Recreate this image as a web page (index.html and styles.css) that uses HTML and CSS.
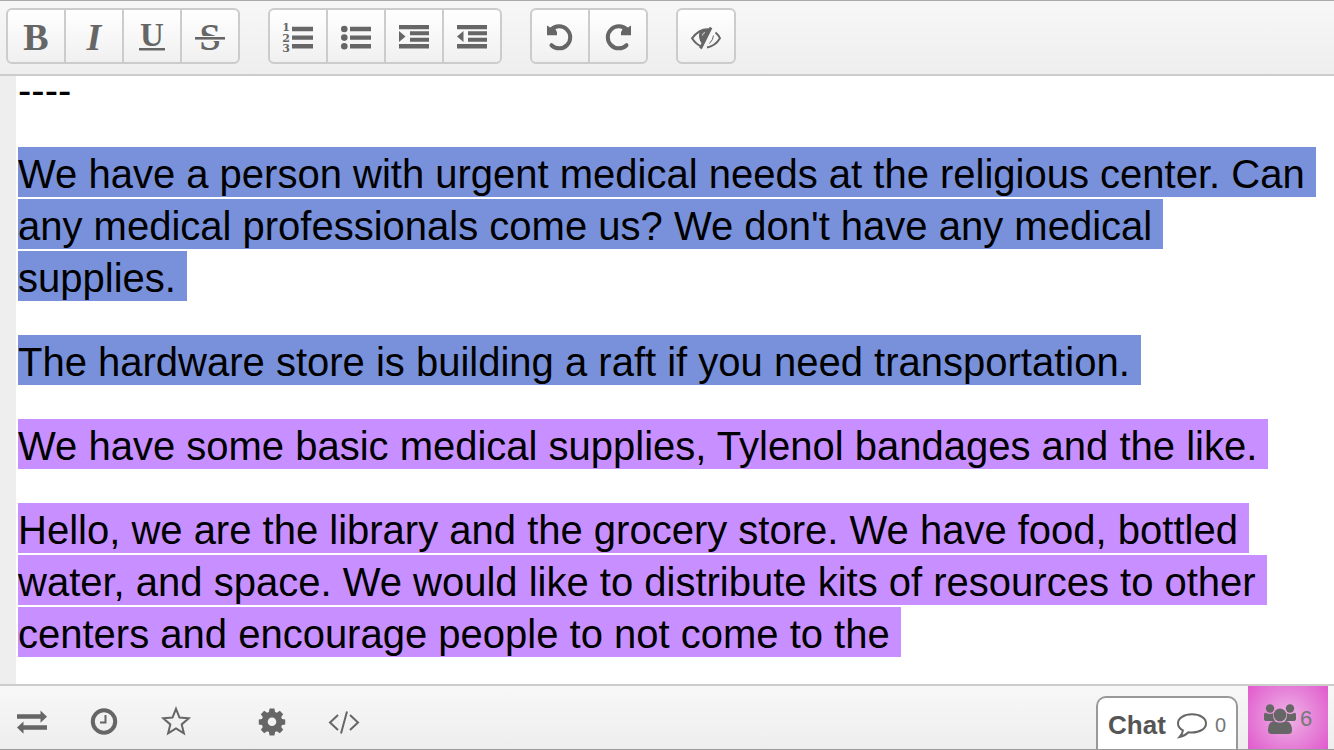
FILE: index.html
```html
<!DOCTYPE html>
<html lang="en">
<head>
<meta charset="utf-8">
<title>Pad</title>
<link rel="stylesheet" href="styles.css">
</head>
<body>
<div class="pad">
  <header class="toolbar" role="toolbar" aria-label="Formatting">
    <div class="group">
      <button class="tool" type="button" aria-label="Bold"><svg viewBox="0 0 56 52"><text class="glyph bold" x="28" y="40">B</text></svg></button>
      <button class="tool" type="button" aria-label="Italic"><svg viewBox="0 0 56 52"><text class="glyph bold italic" x="28" y="40">I</text></svg></button>
      <button class="tool" type="button" aria-label="Underline"><svg viewBox="0 0 56 52"><text class="glyph bold small" x="28" y="36">U</text><rect x="15" y="38" width="26" height="2.5"/></svg></button>
      <button class="tool" type="button" aria-label="Strikethrough"><svg viewBox="0 0 56 52"><text class="glyph bold" x="28" y="40">S</text><rect class="knockout" x="13" y="26" width="30" height="5"/><rect x="13" y="27" width="30" height="2.6"/></svg></button>
    </div>
    <div class="group">
      <button class="tool" type="button" aria-label="Ordered list"><svg viewBox="0 0 56 52"><text class="digit" x="16" y="21">1</text><text class="digit" x="16" y="32">2</text><text class="digit" x="16" y="42">3</text><path d="M22 16.800h21v4.400H22zM22 25.400h21v4.400H22zM22 34h21v4.400H22z"/></svg></button>
      <button class="tool" type="button" aria-label="Unordered list"><svg viewBox="0 0 56 52"><circle cx="16.300" cy="19" r="3.300"/><circle cx="16.300" cy="27.600" r="3.300"/><circle cx="16.300" cy="36.200" r="3.300"/><path d="M22 16.800h21v4.400H22zM22 25.400h21v4.400H22zM22 34h21v4.400H22z"/></svg></button>
      <button class="tool" type="button" aria-label="Indent"><svg viewBox="0 0 56 52"><path d="M13 15h30v4.200H13zM13 34h30v4.400H13zM24 21.300h19v4H24zM24 27.700h19v4H24zM13 21l6.500 5.600L13 32z"/></svg></button>
      <button class="tool" type="button" aria-label="Outdent"><svg viewBox="0 0 56 52"><path d="M13 15h30v4.200H13zM13 34h30v4.400H13zM24 21.300h19v4H24zM24 27.700h19v4H24zM19.500 21L13 26.600l6.500 5.400z"/></svg></button>
    </div>
    <div class="group">
      <button class="tool" type="button" aria-label="Undo"><svg viewBox="0 0 56 52"><path class="arc" d="M19.200 19.800A11 11 0 1 1 19.500 35.200"/><path d="M15 15.500l1.300.8 1.700 1.200 4-1.500 3 6.200v3H15z"/></svg></button>
      <button class="tool" type="button" aria-label="Redo"><svg viewBox="0 0 56 52"><path class="arc" d="M36.800 19.800A11 11 0 1 0 36.500 35.200"/><path d="M41 15.500l-1.300.8-1.700 1.200-4-1.500-3 6.200v3h10z"/></svg></button>
    </div>
    <div class="group">
      <button class="tool" type="button" aria-label="Clear authorship colors"><svg viewBox="0 0 56 52"><path class="line" d="M32 19.500Q22 18 14 28.300q4 6 9 8M37.500 22.500q3 2.500 4.500 5.800-5 8-13 9.200"/><path class="line thin" d="M35.500 25.500q-.5 4.500-4 8"/><path d="M22.500 20h9.500l-7 14.500q-4-3.500-4-8.500 0-3.500 1.500-6z"/><path class="shine" d="M24.500 25.500q0-2.500 2.500-3"/><path class="slash" d="M33 17.500L22.500 38.500"/></svg></button>
    </div>
  </header>

  <main class="editor">
    <div class="text">
      <p class="rule">----</p>
      <p><span class="blue">We have a person with urgent medical needs at the religious center. Can any medical professionals come us? We don't have any medical supplies. </span></p>
      <p><span class="blue">The hardware store is building a raft if you need transportation. </span></p>
      <p><span class="purple">We have some basic medical supplies, Tylenol bandages and the like. </span></p>
      <p><span class="purple">Hello, we are the library and the grocery store. We have food, bottled water, and space. We would like to distribute kits of resources to other centers and encourage people to not come to the </span></p>
    </div>
  </main>

  <footer class="bottombar">
    <div class="actions">
      <button class="action" type="button" aria-label="Import and export"><svg viewBox="0 0 60 60"><path d="M15 28.200h23.500V24.500L45 30.700 38.500 36.800v-4H15zM45 43.700H21.500v4L15 41.500 21.500 35.500v3.800H45z"/></svg></button>
      <button class="action" type="button" aria-label="Timeslider"><svg viewBox="0 0 60 60"><circle class="line ring" cx="30" cy="35.500" r="11.200"/><path class="line" d="M31.500 29v7.500h-5.500"/></svg></button>
      <button class="action" type="button" aria-label="Save revision"><svg viewBox="0 0 60 60"><path class="line" d="M30 22.800l3.500 8.700 9.200.8-7 6.100 2.200 9-7.900-4.900-7.900 4.900 2.200-9-7-6.100 9.200-.8z"/></svg></button>
    </div>
    <div class="actions">
      <button class="action" type="button" aria-label="Settings"><svg viewBox="0 0 60 60"><path fill-rule="evenodd" d="M27.600 22.500h4.800l.7 3.500 1.800.8 2.900-2 3.400 3.400-2 2.900.8 1.800 3.200.7v4.800l-3.200.7-.8 1.800 2 2.900-3.400 3.400-2.900-2-1.800.8-.7 3.500h-4.800l-.7-3.500-1.800-.8-2.900 2-3.400-3.400 2-2.900-.8-1.800-3.200-.7v-4.800l3.200-.7.8-1.800-2-2.900 3.400-3.400 2.900 2 1.800-.8zM30 31.500a4.300 4.300 0 1 0 0 8.600 4.300 4.300 0 0 0 0-8.600z"/></svg></button>
      <button class="action" type="button" aria-label="Embed"><svg viewBox="0 0 60 60"><path class="line" d="M24 29l-8 7.500 8 7.500M36 29l8 7.500-8 7.500M33 25.500L27 47.500"/></svg></button>
    </div>
    <button class="chat" type="button">
      <span class="chat-label">Chat</span>
      <svg class="bubble" viewBox="0 0 32 28"><path class="line" d="M16 2.200c8 0 14 4 14 9.200s-6 9.200-14 9.200q-1.800 0-3.600-.3Q9 24 3.600 24.900q3-3 3.300-6.600Q2 15.500 2 11.400C2 6.200 8 2.200 16 2.200z"/></svg>
      <span class="chat-count">0</span>
    </button>
    <button class="users" type="button" aria-label="6 users">
      <svg viewBox="0 0 32 30"><circle cx="6" cy="4.500" r="4.200"/><circle cx="26" cy="4.500" r="4.200"/><path d="M0 15V11q0-3 2-2 4 2 7 0-.5 5 2 8H3q-3 0-3-2zM32 15V11q0-3-2-2-4 2-7 0 .5 5-2 8h8q3 0 3-2z"/><circle cx="16" cy="11" r="6.400"/><path d="M10 17q6 3.500 12 0 6 1 6 9.500 0 3.500-4 3.500H8q-4 0-4-3.500Q4 18 10 17z"/></svg>
      <span class="user-count">6</span>
    </button>
  </footer>
</div>
</body>
</html>
```
FILE: styles.css
```css
* {
  box-sizing: border-box;
}

body {
  margin: 0;
  background: #fff;
  font-family: "Liberation Sans", Arial, Helvetica, sans-serif;
}

button {
  margin: 0;
  padding: 0;
  border: 0;
  background: none;
  color: #666;
  font-family: inherit;
}

svg {
  display: block;
  fill: #666;
}

.pad {
  display: flex;
  flex-direction: column;
  height: 100vh;
  border-top: 1px solid #aaa;
  border-bottom: 1px solid #999;
}

.toolbar {
  display: flex;
  flex: none;
  gap: 28px;
  padding: 7px 6px 10px;
  border-bottom: 2px solid #ccc;
  background: linear-gradient(#f7f7f7, #eee);
}

.group {
  display: flex;
  overflow: hidden;
  border: 2px solid #ccc;
  border-radius: 6px;
  background: linear-gradient(#fff, #f0f0f0);
}

.tool + .tool {
  border-left: 2px solid #ccc;
}

.tool svg {
  width: 56px;
  height: 52px;
}

.glyph {
  font-family: "Liberation Serif", "Times New Roman", serif;
  font-size: 38px;
  text-anchor: middle;
}

.bold {
  font-weight: bold;
}

.italic {
  font-style: italic;
}

.small {
  font-size: 33px;
}

.digit {
  font-family: "DejaVu Serif", serif;
  font-size: 11px;
  font-weight: bold;
  text-anchor: middle;
}

.knockout {
  fill: #f7f7f7;
}

.line {
  fill: none;
  stroke: #666;
  stroke-width: 2;
}

.thin {
  stroke-width: 1;
}

.ring {
  stroke-width: 4;
}

.arc {
  fill: none;
  stroke: #666;
  stroke-linecap: round;
  stroke-width: 4;
}

.shine {
  fill: none;
  stroke: #ddd;
  stroke-width: 1;
}

.slash {
  stroke: #666;
  stroke-width: 3;
}

.editor {
  flex: 1;
  min-height: 0;
  overflow: hidden;
  border-left: 16px solid #eee;
}

.text {
  display: flex;
  flex-direction: column;
  gap: 32px;
  padding: 0 14px 0 2px;
  color: #000;
  font-size: 40px;
  line-height: 52px;
  white-space: break-spaces;
}

.text p {
  margin: 0;
}

.text .rule {
  margin-bottom: 12px;
  line-height: 28px;
}

.blue,
.purple {
  padding: 5px 0 1px;
}

.blue {
  background: #7891da;
}

.purple {
  background: #c78fff;
}

.bottombar {
  display: flex;
  flex: none;
  height: 65px;
  padding: 0 6px 0 2px;
  border-top: 2px solid #ccc;
  background: linear-gradient(#f7f7f7, #eee);
}

.actions {
  display: flex;
  align-items: flex-start;
  gap: 12px;
  margin-right: 36px;
}

.action svg {
  width: 60px;
  height: 60px;
}

.chat {
  display: flex;
  align-items: center;
  align-self: flex-end;
  gap: 7px;
  height: 53px;
  margin: 0 10px 0 auto;
  padding: 4px 10px 0;
  border: 2px solid #999;
  border-bottom: 0;
  border-radius: 10px 10px 0 0;
  background: #fff;
}

.chat-label {
  margin-right: 3px;
  color: #555;
  font-size: 26px;
  font-weight: bold;
}

.bubble {
  width: 32px;
  height: 28px;
}

.chat-count {
  color: #777;
  font-size: 20px;
}

.users {
  display: flex;
  align-items: center;
  justify-content: center;
  gap: 4px;
  width: 80px;
  padding-top: 2px;
  background: radial-gradient(circle, #eeb4e6, #e05acd);
}

.users svg {
  width: 32px;
  height: 30px;
}

.user-count {
  color: #777;
  font-size: 22px;
}
```
